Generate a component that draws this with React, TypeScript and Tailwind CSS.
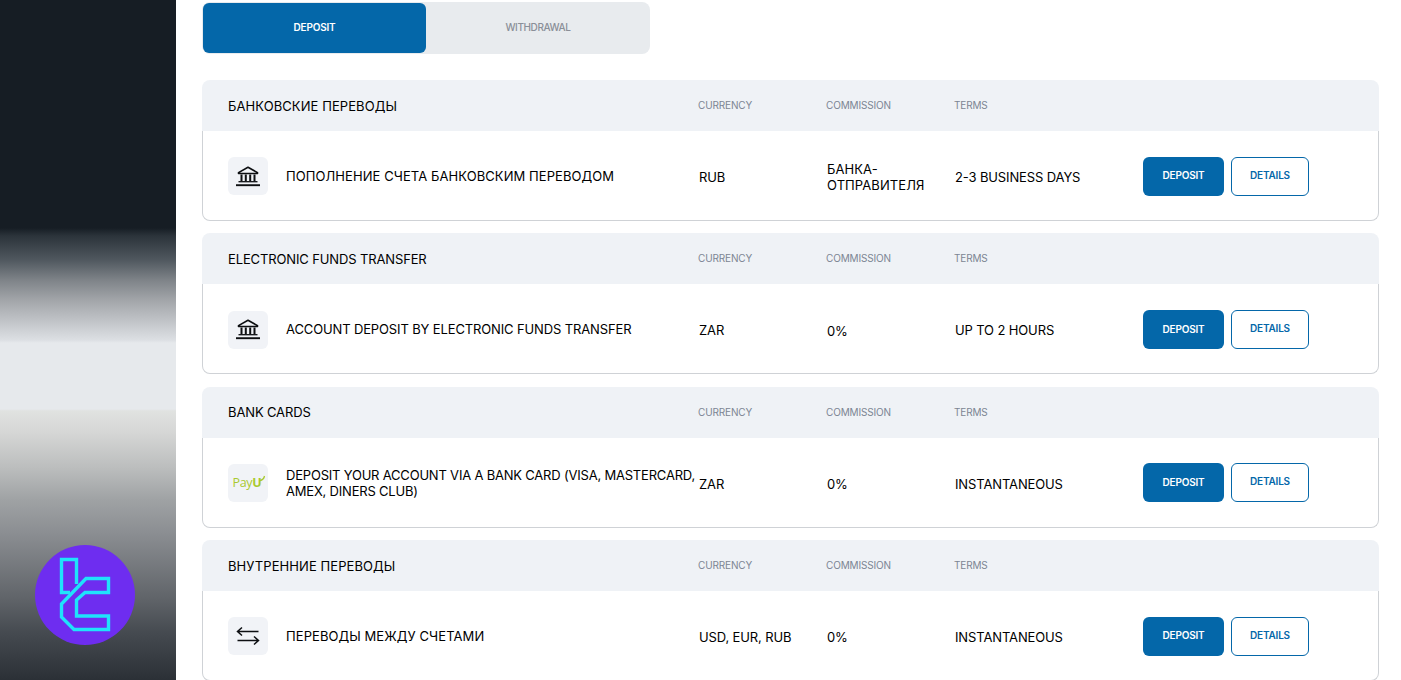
type Method = {
  title: string;
  name: string;
  icon: 'bank' | 'payu' | 'transfer';
  currency: string;
  commission: string;
  terms: string;
};

const methods: Method[] = [
  {
    title: 'БАНКОВСКИЕ ПЕРЕВОДЫ',
    name: 'ПОПОЛНЕНИЕ СЧЕТА БАНКОВСКИМ ПЕРЕВОДОМ',
    icon: 'bank',
    currency: 'RUB',
    commission: 'БАНКА-ОТПРАВИТЕЛЯ',
    terms: '2-3 BUSINESS DAYS',
  },
  {
    title: 'ELECTRONIC FUNDS TRANSFER',
    name: 'ACCOUNT DEPOSIT BY ELECTRONIC FUNDS TRANSFER',
    icon: 'bank',
    currency: 'ZAR',
    commission: '0%',
    terms: 'UP TO 2 HOURS',
  },
  {
    title: 'BANK CARDS',
    name: 'DEPOSIT YOUR ACCOUNT VIA A BANK CARD (VISA, MASTERCARD, AMEX, DINERS CLUB)',
    icon: 'payu',
    currency: 'ZAR',
    commission: '0%',
    terms: 'INSTANTANEOUS',
  },
  {
    title: 'ВНУТРЕННИЕ ПЕРЕВОДЫ',
    name: 'ПЕРЕВОДЫ МЕЖДУ СЧЕТАМИ',
    icon: 'transfer',
    currency: 'USD, EUR, RUB',
    commission: '0%',
    terms: 'INSTANTANEOUS',
  },
];

// cyrillic runs a touch wider than latin in the reference
const tracking = (text: string) => {
  if (/[А-Я]/.test(text)) return 'tracking-[0.08px]';
  return text.length > 60 ? 'tracking-[-0.2px]' : 'tracking-[-0.13px]';
};

function BankIcon() {
  return (
    <svg width="26" height="21" viewBox="0 0 26 21" fill="none" stroke="#0d0f12">
      <path d="M3.5 6.6 13 1.2l9.5 5.4v.9h-19z" strokeWidth="1.6" strokeLinejoin="round" />
      <path d="M6.5 8.5v6.5M10.8 8.5v6.5M15.2 8.5v6.5M19.5 8.5v6.5" strokeWidth="2" />
      <path d="M3.5 15.7h19" strokeWidth="1.3" />
      <path d="M1 19.2h24" strokeWidth="1.9" />
    </svg>
  );
}

function TransferIcon() {
  return (
    <svg width="24" height="20" viewBox="0 0 24 20" fill="none" stroke="#0d0f12" strokeWidth="1.5">
      <path d="M1.5 5.5h21M6 1.5l-4.5 4 4.5 4" />
      <path d="M22.5 14.5h-21M18 10.5l4.5 4-4.5 4" />
    </svg>
  );
}

function PayuIcon() {
  return (
    <div className="relative -ml-[2px] flex items-baseline font-['Open_Sans',sans-serif] text-[12.5px] leading-none tracking-[-0.3px] text-[#a9c92f]">
      Pay<span className="font-bold">U</span>
      <svg width="7" height="7" viewBox="0 0 7 7" fill="none" className="absolute -right-[5px] -top-[2px]">
        <path d="M1 5.5C3.5 5 5 3.5 5.5 1" stroke="#a9c92f" strokeWidth="1.3" />
      </svg>
    </div>
  );
}

function Logo() {
  return (
    <svg width="100" height="100" viewBox="35 545 100 100" className="absolute left-[35px] top-[545px]">
      <circle cx="85" cy="595" r="50" fill="#6e2df0" />
      <g fill="none" stroke="#1fe3fb" strokeWidth="3.4">
        <path d="M70 592.5H61.5V559.5H76.5V584" />
        <path d="M108.5 578.5H86L61.5 604V617L74 629.5H108.5V616H76.5V600L85 592.5H108.5Z" />
      </g>
    </svg>
  );
}

function MethodCard({ method }: { method: Method }) {
  return (
    <section className="mb-[12.33px] w-[1177px] shrink-0">
      <div className="flex h-[51px] items-center rounded-t-lg bg-[#eff2f6] pl-[25px] pt-[2px] text-[10px] tracking-[-0.15px] text-[#7c8593]">
        <h2 className={`w-[471px] shrink-0 pl-px text-[13px] text-black ${tracking(method.title)}`}>{method.title}</h2>
        <span className="w-[128px] shrink-0 -translate-y-px">CURRENCY</span>
        <span className="w-[128px] shrink-0 -translate-y-px">COMMISSION</span>
        <span className="-translate-y-px">TERMS</span>
      </div>
      <div className="flex h-[90px] items-center rounded-b-lg border border-t-0 border-[#cfd2d6] pl-[25px] pt-[1.4px] text-[13px] text-black">
        <div className="flex h-[38px] w-[40px] shrink-0 items-center justify-center rounded-md bg-[#f1f3f7]">
          {method.icon === 'bank' && <BankIcon />}
          {method.icon === 'payu' && <PayuIcon />}
          {method.icon === 'transfer' && <TransferIcon />}
        </div>
        <p className={`-mt-[0.4px] ml-[18px] w-[413px] shrink-0 leading-[16px] ${tracking(method.name)}`}>{method.name}</p>
        <span className={`w-[128px] shrink-0 pt-[3px] ${tracking(method.currency)}`}>{method.currency}</span>
        <span className={`w-[128px] shrink-0 pr-2 pt-[2px] leading-[16px] ${tracking(method.commission)}`}>{method.commission}</span>
        <span className={`w-[188px] shrink-0 pt-[3px] ${tracking(method.terms)}`}>{method.terms}</span>
        <button className="h-[39px] w-[81px] shrink-0 rounded-md bg-[#0467a9] pb-px text-[10px] font-semibold tracking-[-0.2px] text-white">
          DEPOSIT
        </button>
        <button className="ml-[7px] h-[39px] w-[78px] shrink-0 rounded-md border border-[#0467a9] pb-[2px] text-[10px] font-semibold tracking-[-0.2px] text-[#0467a9]">
          DETAILS
        </button>
      </div>
    </section>
  );
}

export default function App() {
  return (
    <div className="relative flex h-[680px] overflow-hidden bg-white font-['Inter',sans-serif]">
      <aside className="w-[176px] shrink-0 bg-[linear-gradient(to_bottom,#161d24_0px,#161d24_228px,#2c343b_236px,#50585f_260px,#7e8388_280px,#a2a5a9_300px,#bfc2c6_320px,#dcdfe3_340px,#e6e9ec_343px,#e6e9ec_409px,#e0e2e0_411px,#d5d6d5_433px,#bcbebe_467px,#9fa2a4_500px,#8b8e92_533px,#5f6368_600px,#454a50_633px,#2b3036_680px)]" />
      <Logo />
      <main className="flex-1 pl-[26px] pt-[2px]">
        <div className="flex h-[52px] w-[448px] items-center rounded-lg bg-[#e8ebee] pl-px text-[10px]">
          <button className="h-[50px] w-[223px] rounded-md bg-[#0467a9] pb-px font-semibold tracking-[-0.2px] text-white">DEPOSIT</button>
          <button className="flex-1 pb-[2px] font-medium tracking-[-0.4px] text-[#8a8f98]">WITHDRAWAL</button>
        </div>
        <div className="mt-[26px]">
          {methods.map((method) => (
            <MethodCard key={method.title} method={method} />
          ))}
        </div>
      </main>
    </div>
  );
}
